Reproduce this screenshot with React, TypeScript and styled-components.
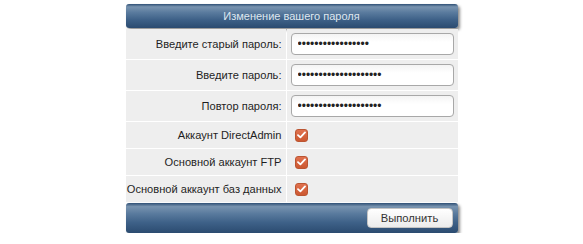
import React from 'react';
import styled, { createGlobalStyle } from 'styled-components';

const GlobalStyle = createGlobalStyle`
	html, body {
		margin: 0;
		padding: 0;
		background: #ffffff;
		font-family: 'Liberation Sans', Arial, sans-serif;
	}
`;

const Panel = styled.div`
	width: 332px;
	margin: 4px auto 0;
	display: flex;
	flex-direction: column;
	gap: 1px;
	background: #ffffff;
`;

const Bar = styled.div<{ $align: 'center' | 'end' }>`
	height: 30px;
	display: flex;
	align-items: center;
	justify-content: ${(p) => (p.$align === 'center' ? 'center' : 'flex-end')};
	padding: 0 5px;
	border-radius: 3px;
	background: linear-gradient(#2f5075 0%, #7893af 12%, #5a7b9e 35%, #3e6188 65%, #2b4b70 100%);
	box-shadow: 2px 2px 3px rgba(0, 0, 0, 0.45);
	color: #dfe7ef;
	font-size: 11px;
`;

const Header = styled(Bar)`
	height: 24px;
`;

const Row = styled.div<{ $h: number }>`
	display: grid;
	grid-template-columns: 160px 1fr;
	column-gap: 1px;
	height: ${(p) => p.$h}px;
`;

const Label = styled.div`
	background: #eeeeee;
	display: flex;
	align-items: center;
	justify-content: flex-end;
	padding-right: 4px;
	font-size: 11.1px;
	color: #1e1e1e;
	white-space: nowrap;
`;

const Cell = styled.div`
	background: #eeeeee;
	display: flex;
	align-items: center;
	padding-left: 4px;
`;

const Input = styled.input`
	box-sizing: border-box;
	width: 163px;
	height: 22px;
	border: 1px solid #a8a8a8;
	border-radius: 4px;
	background: linear-gradient(#f4f4f4, #ffffff 40%);
	padding: 0 6px;
	font-family: 'Liberation Sans', Arial, sans-serif;
	font-size: 12px;
	color: #222;
	outline: none;
`;

const Check = styled.span`
	box-sizing: border-box;
	width: 13px;
	height: 13px;
	margin-left: 4px;
	border-radius: 3px;
	background: linear-gradient(#e0714e, #cc5831);
	border: 1px solid #bb5532;
	display: flex;
	align-items: center;
	justify-content: center;
`;

const Button = styled.button`
	width: 86px;
	height: 20px;
	border: 1px solid #c4c4c4;
	border-radius: 4px;
	background: linear-gradient(#ffffff, #ececec);
	font-family: 'Liberation Sans', Arial, sans-serif;
	font-size: 11.2px;
	color: #333;
	padding: 0;
`;

const CheckMark = () => (
	<Check>
		<svg width="9" height="8" viewBox="0 0 9 8">
			<path d="M1 4.2 L3.4 6.4 L8 1.4" stroke="#fff" strokeWidth="1.8" fill="none" strokeLinecap="round" strokeLinejoin="round" />
		</svg>
	</Check>
);

const fields = [
	{ label: 'Введите старый пароль:', value: 'x'.repeat(17) },
	{ label: 'Введите пароль:', value: 'x'.repeat(20) },
	{ label: 'Повтор пароля:', value: 'x'.repeat(20) },
];

const checks = ['Аккаунт DirectAdmin', 'Основной аккаунт FTP', 'Основной аккаунт баз данных'];

export default function App() {
	return (
		<>
			<GlobalStyle />
			<Panel>
				<Header $align="center">Изменение вашего пароля</Header>
				{fields.map((f) => (
					<Row key={f.label} $h={30}>
						<Label>{f.label}</Label>
						<Cell>
							<Input type="password" defaultValue={f.value} />
						</Cell>
					</Row>
				))}
				{checks.map((c) => (
					<Row key={c} $h={26}>
						<Label>{c}</Label>
						<Cell>
							<CheckMark />
						</Cell>
					</Row>
				))}
				<Bar $align="end">
					<Button>Выполнить</Button>
				</Bar>
			</Panel>
		</>
	);
}
